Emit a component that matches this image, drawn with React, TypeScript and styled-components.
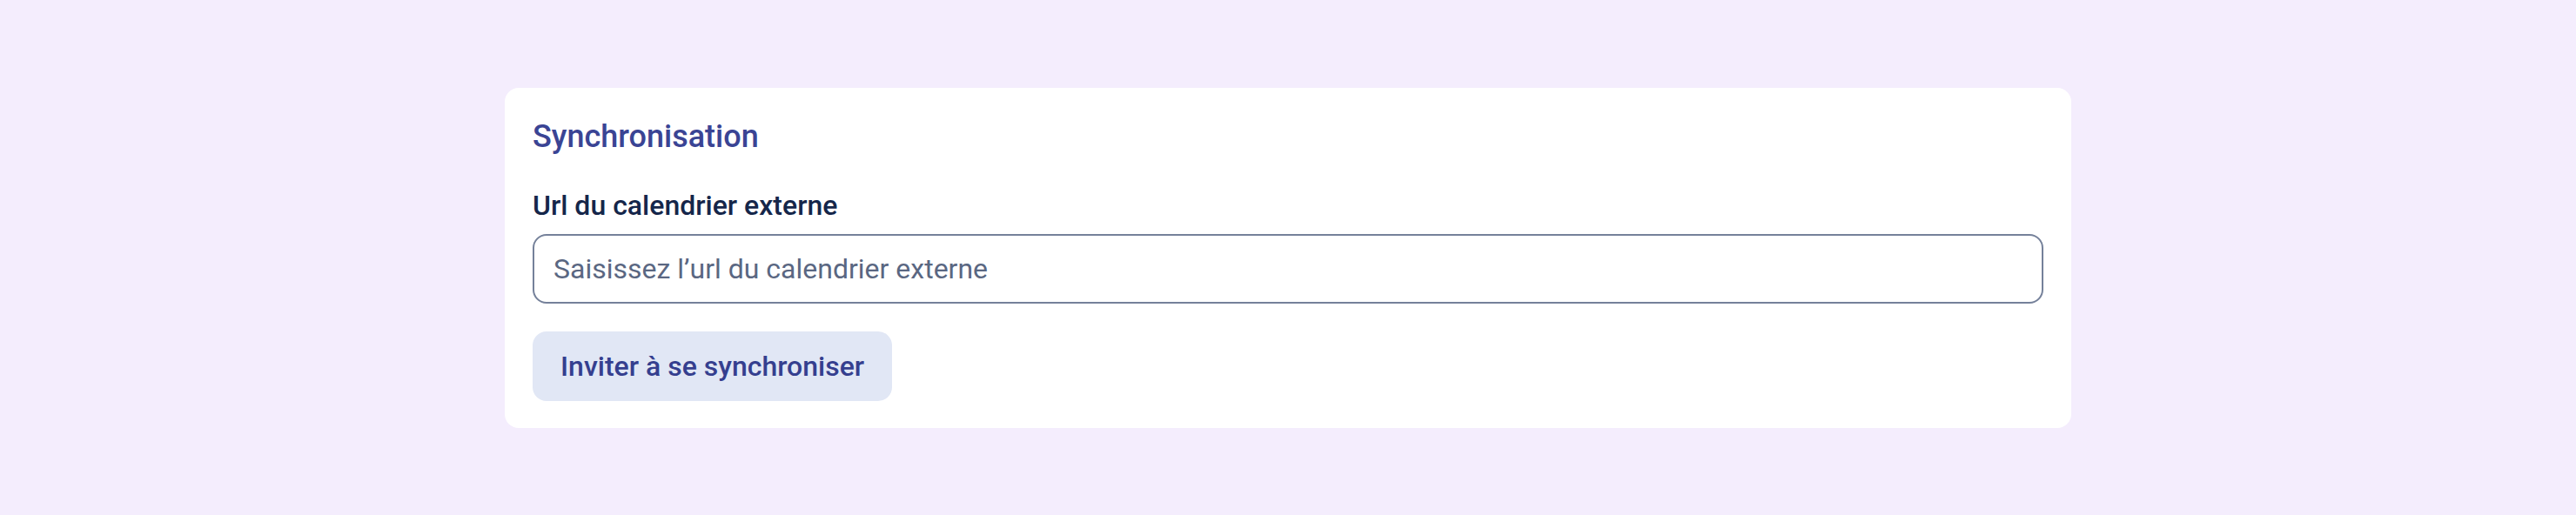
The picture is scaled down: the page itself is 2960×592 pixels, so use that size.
import styled, { createGlobalStyle } from 'styled-components';

const GlobalStyle = createGlobalStyle`
  html, body {
    margin: 0;
    padding: 0;
    background: #f4edfd;
  }
  body {
    font-family: 'Roboto', 'Liberation Sans', sans-serif;
  }
`;

const Page = styled.div`
  display: flex;
  align-items: center;
  justify-content: center;
  min-height: 100vh;
`;

const Card = styled.section`
  display: flex;
  flex-direction: column;
  align-items: flex-start;
  box-sizing: border-box;
  width: 1800px;
  padding: 32px 32px 31px;
  background: #ffffff;
  border-radius: 16px;
`;

const Title = styled.h2`
  margin: 0 0 35px;
  font-size: 36px;
  line-height: 48px;
  font-weight: 500;
  color: #3a4494;
`;

const Label = styled.label`
  display: block;
  margin: 0 0 13px;
  font-size: 32px;
  line-height: 40px;
  font-weight: 500;
  color: #15264a;
`;

const UrlInput = styled.input`
  box-sizing: border-box;
  width: 100%;
  height: 80px;
  margin: 0 0 32px;
  padding: 0 22px;
  border: 2px solid #75819a;
  border-radius: 16px;
  background: #ffffff;
  font-family: 'Roboto', 'Liberation Sans', sans-serif;
  font-size: 32px;
  color: #15264a;
  outline: none;

  &::placeholder {
    color: #5a6782;
    opacity: 1;
  }
`;

const SyncButton = styled.button`
  height: 80px;
  padding: 0 32px;
  border: none;
  border-radius: 16px;
  background: #e1e7f5;
  font-family: 'Roboto', 'Liberation Sans', sans-serif;
  font-size: 32px;
  font-weight: 500;
  color: #353f8f;
  cursor: pointer;
`;

function App(): JSX.Element {
  return (
    <>
      <GlobalStyle />
      <Page>
        <Card>
          <Title>Synchronisation</Title>
          <Label htmlFor="external-url">Url du calendrier externe</Label>
          <UrlInput id="external-url" type="text" placeholder="Saisissez l’url du calendrier externe" />
          <SyncButton type="button">Inviter à se synchroniser</SyncButton>
        </Card>
      </Page>
    </>
  );
}

export default App;
